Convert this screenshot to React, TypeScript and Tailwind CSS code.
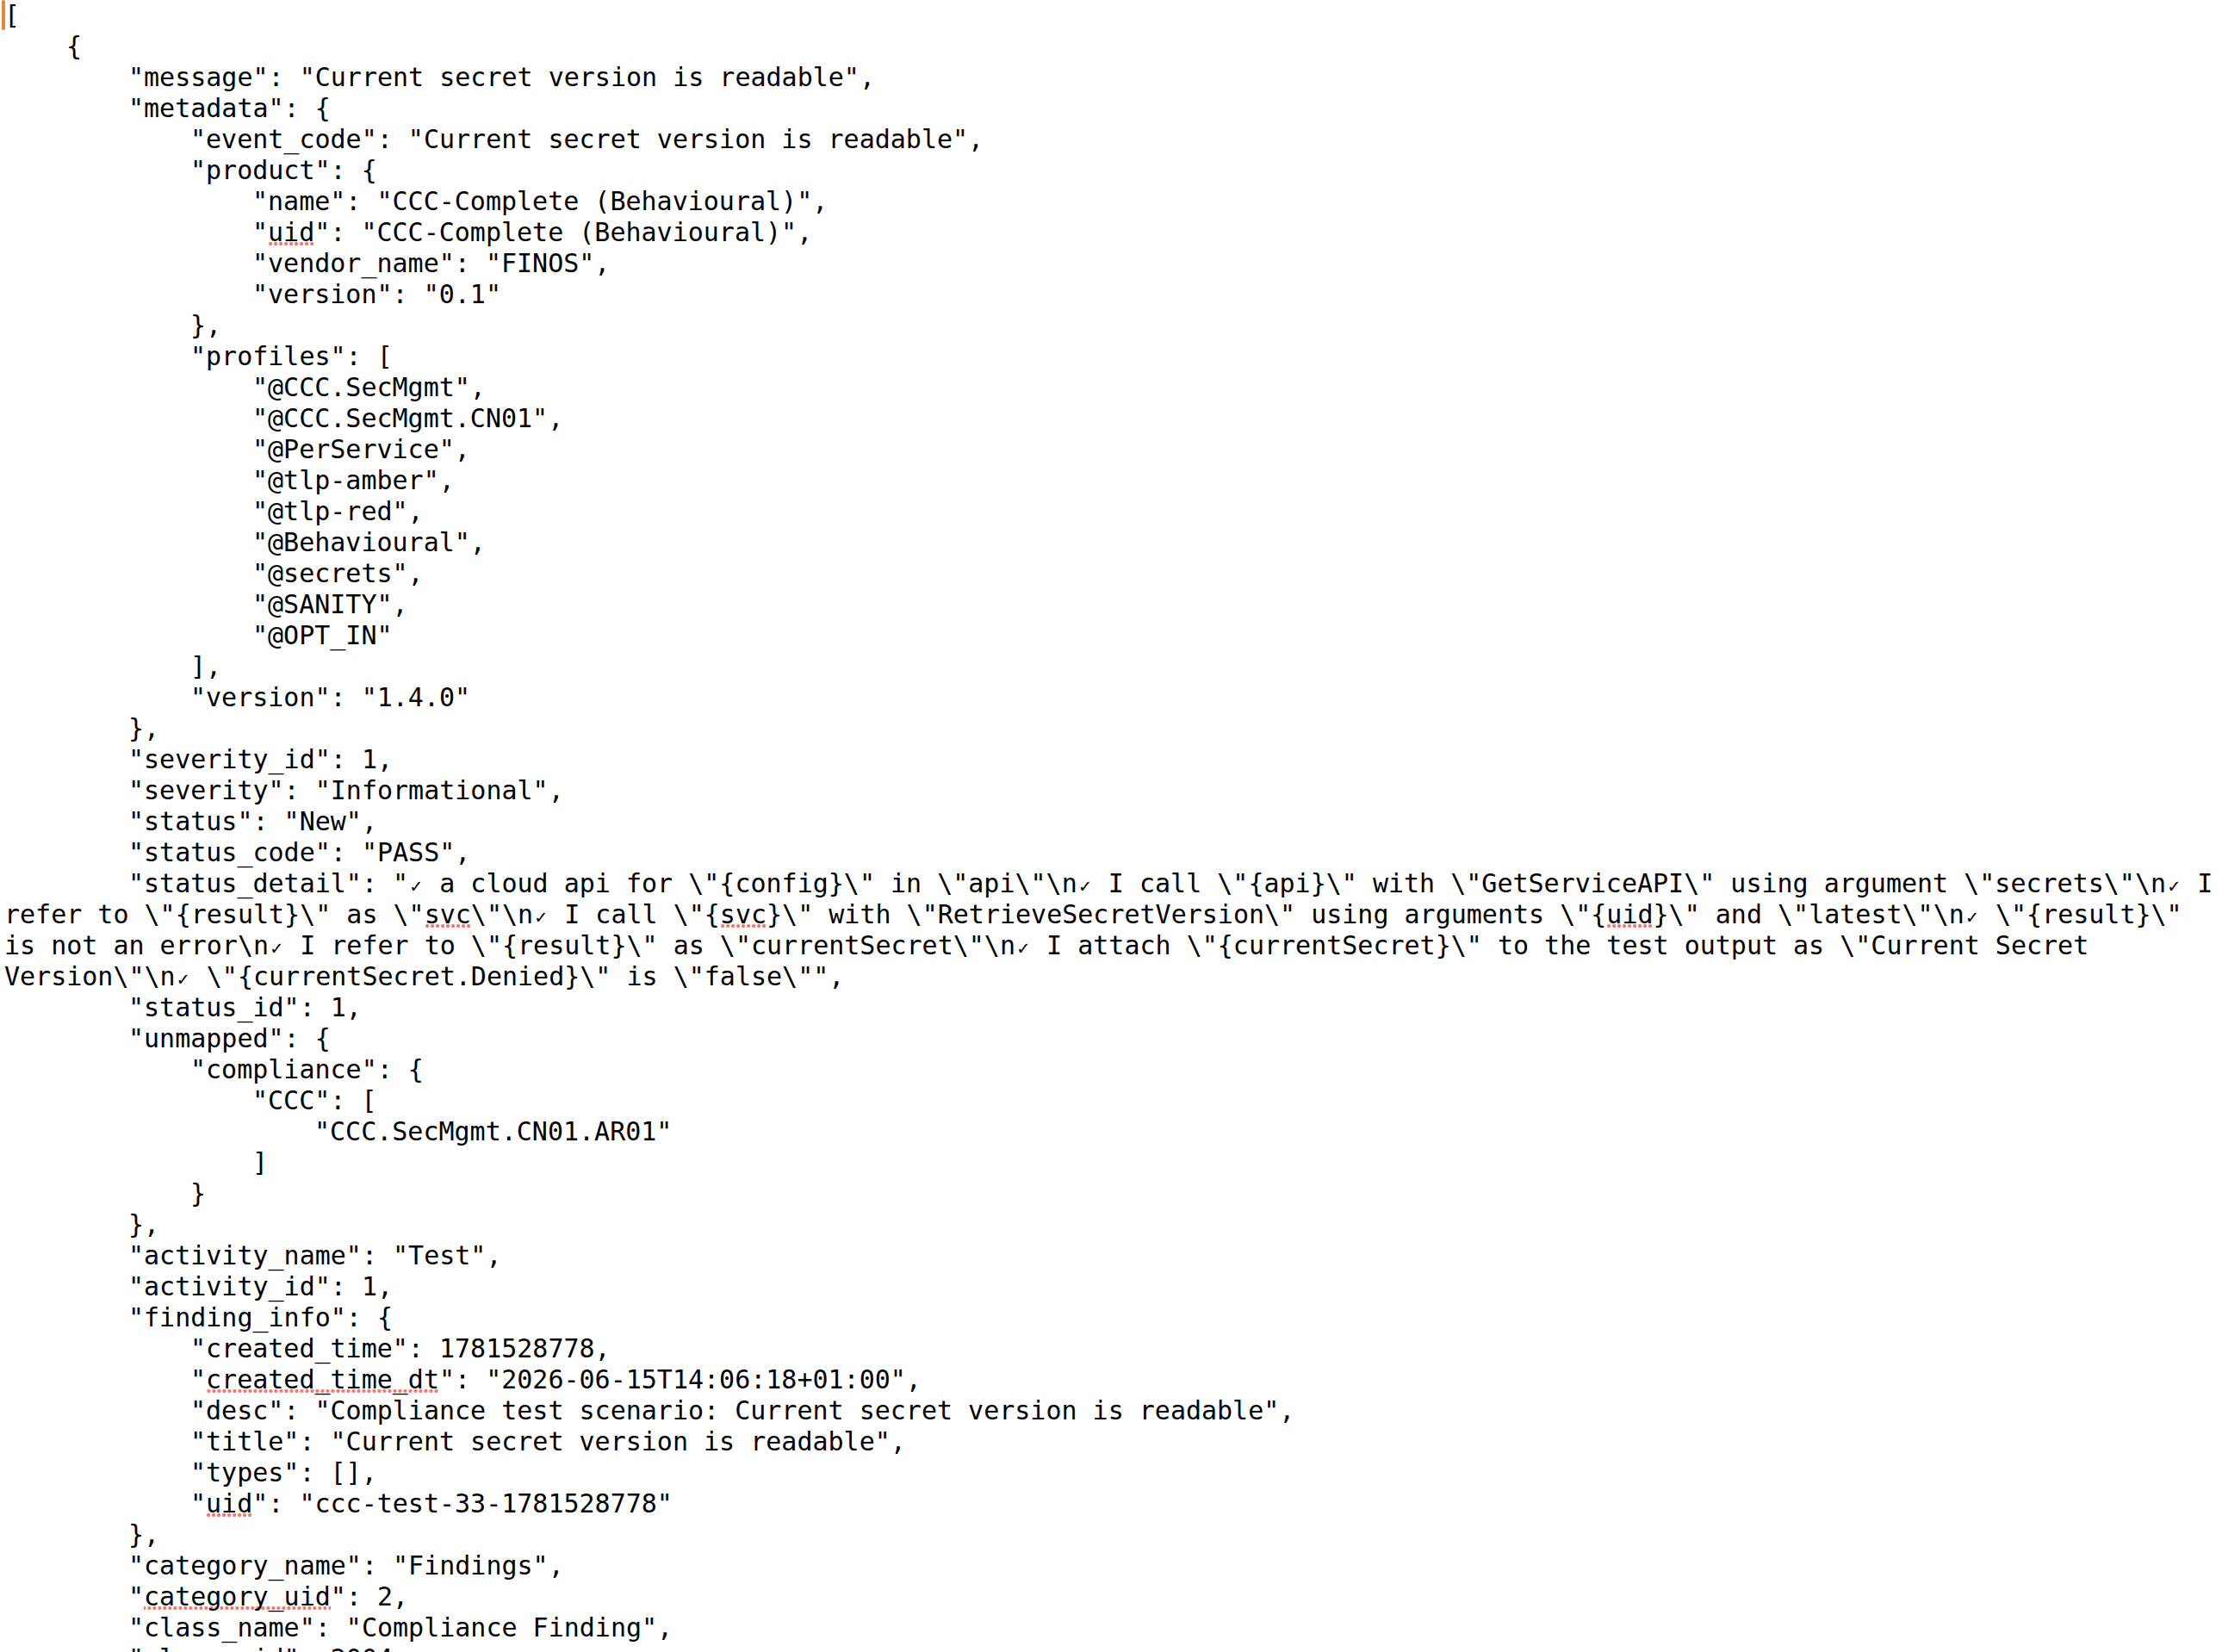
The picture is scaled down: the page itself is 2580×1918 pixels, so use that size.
import React from "react";

// indent levels follow the editor's tab stops (72px apart)
const indent = [
  "pl-[5px]",
  "pl-[77px]",
  "pl-[149px]",
  "pl-[221px]",
  "pl-[293px]",
  "pl-[365px]",
];

// ~word~ marks a word the spell checker has underlined
const lines: [number, string][] = [
  [0, String.raw`[`],
  [1, String.raw`{`],
  [2, String.raw`"message": "Current secret version is readable",`],
  [2, String.raw`"metadata": {`],
  [3, String.raw`"event_code": "Current secret version is readable",`],
  [3, String.raw`"product": {`],
  [4, String.raw`"name": "CCC-Complete (Behavioural)",`],
  [4, String.raw`"~uid~": "CCC-Complete (Behavioural)",`],
  [4, String.raw`"vendor_name": "FINOS",`],
  [4, String.raw`"version": "0.1"`],
  [3, String.raw`},`],
  [3, String.raw`"profiles": [`],
  [4, String.raw`"@CCC.SecMgmt",`],
  [4, String.raw`"@CCC.SecMgmt.CN01",`],
  [4, String.raw`"@PerService",`],
  [4, String.raw`"@tlp-amber",`],
  [4, String.raw`"@tlp-red",`],
  [4, String.raw`"@Behavioural",`],
  [4, String.raw`"@secrets",`],
  [4, String.raw`"@SANITY",`],
  [4, String.raw`"@OPT_IN"`],
  [3, String.raw`],`],
  [3, String.raw`"version": "1.4.0"`],
  [2, String.raw`},`],
  [2, String.raw`"severity_id": 1,`],
  [2, String.raw`"severity": "Informational",`],
  [2, String.raw`"status": "New",`],
  [2, String.raw`"status_code": "PASS",`],
  [2, String.raw`"status_detail": "✓ a cloud api for \"{config}\" in \"api\"\n✓ I call \"{api}\" with \"GetServiceAPI\" using argument \"secrets\"\n✓ I`],
  [0, String.raw`refer to \"{result}\" as \"~svc~\"\n✓ I call \"{~svc~}\" with \"RetrieveSecretVersion\" using arguments \"{~uid~}\" and \"latest\"\n✓ \"{result}\"`],
  [0, String.raw`is not an error\n✓ I refer to \"{result}\" as \"currentSecret\"\n✓ I attach \"{currentSecret}\" to the test output as \"Current Secret`],
  [0, String.raw`Version\"\n✓ \"{currentSecret.Denied}\" is \"false\"",`],
  [2, String.raw`"status_id": 1,`],
  [2, String.raw`"unmapped": {`],
  [3, String.raw`"compliance": {`],
  [4, String.raw`"CCC": [`],
  [5, String.raw`"CCC.SecMgmt.CN01.AR01"`],
  [4, String.raw`]`],
  [3, String.raw`}`],
  [2, String.raw`},`],
  [2, String.raw`"activity_name": "Test",`],
  [2, String.raw`"activity_id": 1,`],
  [2, String.raw`"finding_info": {`],
  [3, String.raw`"created_time": 1781528778,`],
  [3, String.raw`"~created_time_dt~": "2026-06-15T14:06:18+01:00",`],
  [3, String.raw`"desc": "Compliance test scenario: Current secret version is readable",`],
  [3, String.raw`"title": "Current secret version is readable",`],
  [3, String.raw`"types": [],`],
  [3, String.raw`"~uid~": "ccc-test-33-1781528778"`],
  [2, String.raw`},`],
  [2, String.raw`"category_name": "Findings",`],
  [2, String.raw`"~category_uid~": 2,`],
  [2, String.raw`"class_name": "Compliance Finding",`],
  [2, String.raw`"class_uid": 2004,`],
];

function withChecks(text: string) {
  const bits = text.split("✓");
  return bits.map((b, i) => (
    <React.Fragment key={i}>
      {b}
      {i < bits.length - 1 && (
        <span className="inline-block w-[18.06px] text-[22px] text-center">
          ✓
        </span>
      )}
    </React.Fragment>
  ));
}

function Line({ level, text }: { level: number; text: string }) {
  const parts = text.split("~");
  return (
    <div className={`${indent[level]} h-[36px] whitespace-pre`}>
      {parts.map((p, i) =>
        i % 2 ? (
          <span
            key={i}
            className="bg-[radial-gradient(circle,#ef7b6f_1.8px,transparent_2.4px)] bg-[length:6px_8px] bg-repeat-x bg-bottom"
          >
            {p}
          </span>
        ) : (
          <React.Fragment key={i}>{withChecks(p)}</React.Fragment>
        )
      )}
    </div>
  );
}

export default function App() {
  return (
    <div className="relative h-[1918px] w-[2580px] overflow-hidden bg-white text-black font-['DejaVu_Sans_Mono',monospace] text-[30px] leading-[36px]">
      {/* caret */}
      <div className="absolute left-[2px] top-0 h-[35px] w-[4px] rounded-full bg-[#e8873a]" />
      {lines.map(([level, text], i) => (
        <Line key={i} level={level} text={text} />
      ))}
    </div>
  );
}
